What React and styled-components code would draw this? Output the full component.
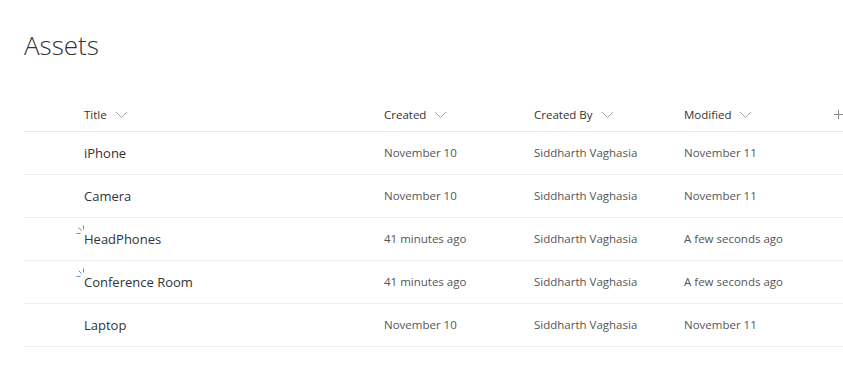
import React from "react";
import styled, { createGlobalStyle } from "styled-components";

const GlobalStyle = createGlobalStyle`
  body {
    margin: 0;
    background: #fff;
    font-family: "Open Sans", "Noto Sans", sans-serif;
    color: #333;
  }
`;

const items = [
  { title: "iPhone", created: "November 10", by: "Siddharth Vaghasia", modified: "November 11" },
  { title: "Camera", created: "November 10", by: "Siddharth Vaghasia", modified: "November 11" },
  { title: "HeadPhones", created: "41 minutes ago", by: "Siddharth Vaghasia", modified: "A few seconds ago", isNew: true },
  { title: "Conference Room", created: "41 minutes ago", by: "Siddharth Vaghasia", modified: "A few seconds ago", isNew: true },
  { title: "Laptop", created: "November 10", by: "Siddharth Vaghasia", modified: "November 11" },
];

const columns = ["Title", "Created", "Created By", "Modified"];

function Chevron() {
  return (
    <svg width="13" height="8" viewBox="0 0 13 8">
      <path d="M1 1 L6.5 6.5 L12 1" fill="none" stroke="#a6a6a6" strokeWidth="1" />
    </svg>
  );
}

// little "new item" burst next to recently added titles
function NewMark() {
  return (
    <NewIcon width="8" height="9" viewBox="0 0 8 9">
      <path d="M7.5 0.5 V4.5" stroke="#5b8fcb" strokeWidth="1" />
      <path d="M2.5 2.5 L5.5 5.5" stroke="#5b8fcb" strokeWidth="1" />
      <path d="M0.5 8.5 H4.5" stroke="#5b8fcb" strokeWidth="1" />
    </NewIcon>
  );
}

function PlusIcon() {
  return (
    <svg width="9" height="9" viewBox="0 0 9 9">
      <path d="M4.5 0 V9 M0 4.5 H9" stroke="#8a8a8a" strokeWidth="1" />
    </svg>
  );
}

function App() {
  return (
    <Page>
      <GlobalStyle />
      <Heading>Assets</Heading>
      <Table>
        <HeaderRow>
          <Gutter />
          {columns.map((c) => (
            <HeaderCell key={c}>
              {c}
              <Chevron />
            </HeaderCell>
          ))}
          <AddCol>
            <PlusIcon />
          </AddCol>
        </HeaderRow>
        {items.map((it) => (
          <Row key={it.title}>
            <Gutter />
            <TitleCell>
              {it.isNew && <NewMark />}
              {it.title}
            </TitleCell>
            <Cell>{it.created}</Cell>
            <Cell>{it.by}</Cell>
            <Cell>{it.modified}</Cell>
            <span />
          </Row>
        ))}
      </Table>
    </Page>
  );
}

const Page = styled.div`
  padding: 27px 0 0 24px;
  height: 390px;
  box-sizing: border-box;
`;

const Heading = styled.h1`
  margin: 0;
  font-size: 26px;
  font-weight: 300;
  color: #333;
  line-height: 36px;
`;

const Table = styled.div`
  margin-top: 35px;
  display: flex;
  flex-direction: column;
`;

const grid = `
  display: grid;
  grid-template-columns: 60px 300px 150px 150px 150px 1fr;
  align-items: center;
  border-bottom: 1px solid #eaeaea;
`;

const HeaderRow = styled.div`
  ${grid}
  height: 34px;
  box-sizing: border-box;
`;

const Row = styled.div`
  ${grid}
  height: 43px;
  box-sizing: border-box;
  border-bottom-color: #f0f0f0;
`;

const Gutter = styled.span``;

const HeaderCell = styled.div`
  display: flex;
  align-items: center;
  gap: 8px;
  font-size: 11.5px;
  color: #333;
`;

const AddCol = styled.div`
  display: flex;
  justify-content: flex-end;
  padding-right: 1px;
`;

const TitleCell = styled.div`
  position: relative;
  font-size: 13px;
  line-height: 18px;
  color: #333;
`;

const NewIcon = styled.svg`
  position: absolute;
  left: -8px;
  top: -5px;
`;

const Cell = styled.div`
  font-size: 11.5px;
  color: #555;
  padding-bottom: 1px;
`;

export default App;
